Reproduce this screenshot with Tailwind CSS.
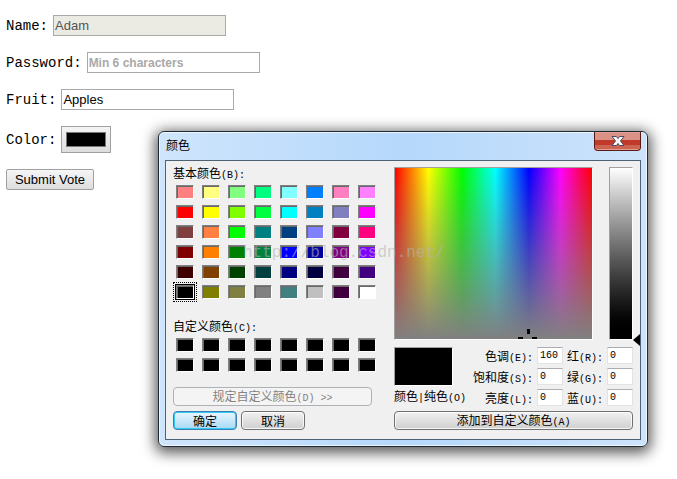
<!DOCTYPE html>
<html lang="zh-CN">
<head>
  <title>Vote</title>
  <meta charset="utf-8">
  <meta name="viewport" content="width=device-width, initial-scale=1">
  <script src="https://cdn.jsdelivr.net/npm/@tailwindcss/browser@4"></script>
</head>

<body class="relative min-h-screen bg-white text-black">
  <!-- Vote form -->
  <form class="flex flex-col items-start gap-4 pt-[15px] pl-[6px] font-['Liberation_Mono',monospace] text-sm">
    <div class="flex items-center gap-[5px]">
      <label for="name">Name:</label>
      <input id="name" type="text" value="Adam" disabled class="h-[21px] w-[173px] border border-[#a9a9a9] bg-[#ebebe4] px-px font-['Liberation_Sans',sans-serif] text-[13px] text-[#545454]">
    </div>
    <div class="flex items-center gap-[5px]">
      <label for="password">Password:</label>
      <input id="password" type="password" placeholder="Min 6 characters" class="h-[21px] w-[173px] border border-[#a9a9a9] bg-white px-px font-['Liberation_Sans',sans-serif] text-xs placeholder:font-bold placeholder:text-[#a9a9a9]">
    </div>
    <div class="flex items-center gap-[5px]">
      <label for="fruit">Fruit:</label>
      <input id="fruit" type="text" value="Apples" class="h-[21px] w-[173px] border border-[#a9a9a9] bg-white px-px font-['Liberation_Sans',sans-serif] text-[13px]">
    </div>
    <div class="flex items-center gap-[5px]">
      <label for="color">Color:</label>
      <input id="color" type="color" value="#000000" class="h-[27px] w-[50px] appearance-none border border-[#a0a0a0] bg-linear-to-b from-[#f4f4f4] to-[#dddddd] px-1 py-[5px] [&::-webkit-color-swatch-wrapper]:p-0 [&::-webkit-color-swatch]:rounded-none [&::-webkit-color-swatch]:border [&::-webkit-color-swatch]:border-[#777777]">
    </div>
    <button type="button" class="h-[21px] w-[88px] rounded-xs border border-[#a0a0a0] bg-linear-to-b from-[#f6f6f6] to-[#dddddd] font-['Liberation_Sans',sans-serif] text-[13px] leading-none whitespace-nowrap">Submit Vote</button>
  </form>

  <!-- Color dialog -->
  <div role="dialog" aria-labelledby="dialog-title" class="absolute top-[131px] right-[29px] left-[158px] min-w-[490px] rounded-md border border-[#1c2a36] bg-linear-to-r from-[#cfe5fc] via-[#b5d8fb] to-[#cde3fb] px-[6px] pb-[6px] font-['Noto_Sans_CJK_SC',sans-serif] text-xs leading-4 shadow-[0_3px_14px_3px_rgba(0,0,0,0.65)] inset-ring inset-ring-white/70">
    <div class="flex h-7 items-start justify-between">
      <h1 id="dialog-title" class="pt-[5px] pl-px">颜色</h1>
      <button type="button" aria-label="Close" class="flex h-[19px] w-[47px] items-center justify-center overflow-hidden rounded-b-sm border border-t-0 border-[#5c1a14] bg-[#e0a096]">
        <svg width="47" height="18" viewBox="0 0 47 18" class="shrink-0">
          <rect x="1" y="1" width="45" height="7" fill="#dc9186"/>
          <rect x="1" y="8" width="45" height="5" fill="#c0392b"/>
          <rect x="1" y="13" width="45" height="4" fill="#cd6350"/>
          <path d="M18 4.500h4.500l1.500 2 1.500-2H30l-3.500 4.500 3.500 4.500h-4.500l-1.500-2-1.500 2H18L21.500 9z" fill="#f8f8f8" stroke="#4b4a5e" stroke-width="1"/>
        </svg>
      </button>
    </div>

    <div class="flex justify-between border border-[#4f6274] bg-[#f0f0f0] pt-1 pr-[7px] pb-[9px] pl-[7px]">
      <!-- Swatches -->
      <div class="flex flex-col items-start">
        <h2 class="mb-1">基本颜色<span class="font-['Liberation_Mono',monospace] text-[10px]/none">(B):</span></h2>
        <div id="basic" class="grid grid-cols-8 gap-x-2 gap-y-[6px] pl-[3px]"></div>
        <h2 class="mt-[19px] mb-1">自定义颜色<span class="font-['Liberation_Mono',monospace] text-[10px]/none">(C):</span></h2>
        <div id="custom" class="grid grid-cols-8 gap-x-2 gap-y-[6px] pl-[3px]"></div>
        <button type="button" disabled class="mt-[15px] h-[19px] w-[199px] rounded-sm border border-[#adb2b5] bg-[#f4f4f4] leading-none text-[#838383]">规定自定义颜色<span class="font-['Liberation_Mono',monospace] text-[10px]/none">(D) &gt;&gt;</span></button>
        <div class="mt-[5px] flex gap-1">
          <button type="button" class="h-[19px] w-16 rounded-sm border border-[#3c7fb1] bg-linear-to-b from-[#eaf6fd] to-[#a7d9f5] leading-none inset-ring inset-ring-[#35c8f5]">确定</button>
          <button type="button" class="h-[19px] w-16 rounded-sm border border-[#707070] bg-linear-to-b from-[#f2f2f2] to-[#cfcfcf] leading-none inset-ring inset-ring-white/80">取消</button>
        </div>
      </div>

      <div class="flex w-[239px] flex-col pt-[2px]">
        <!-- Hue / saturation field and luminosity bar -->
        <div class="flex h-[173px]">
          <div class="relative w-[199px] border border-t-[#a0a0a0] border-r-white border-b-white border-l-[#a0a0a0] bg-[linear-gradient(to_bottom,rgba(128,128,128,0),rgb(128,128,128)),linear-gradient(to_right,#f00,#ff0_17%,#0f0_34%,#0ff_51%,#00f_68%,#f0f_84%,#f00)]">
            <svg width="19" height="11" viewBox="0 0 19 11" class="absolute right-[55px] bottom-0">
              <path d="M9 1h3v5h-3zM0 9h5v2h-5zM14 9h5v2h-5z" fill="#000"/>
            </svg>
          </div>
          <div class="ml-4 w-6 border border-t-[#a0a0a0] border-r-white border-b-white border-l-[#a0a0a0] bg-linear-to-b from-white to-black"></div>
          <svg width="7" height="12" viewBox="0 0 7 12" class="-mr-[7px] -mb-[6px] shrink-0 self-end">
            <path d="M0 6l7-6v12z" fill="#000"/>
          </svg>
        </div>

        <!-- Preview and numeric values -->
        <div class="mt-[7px] flex justify-between">
          <div>
            <div class="h-[39px] w-[59px] border border-t-[#a0a0a0] border-r-white border-b-white border-l-[#a0a0a0] bg-black"></div>
            <p class="mt-[2px] whitespace-nowrap">颜色<span class="font-['Liberation_Mono',monospace] text-[10px]/none">|</span>纯色<span class="font-['Liberation_Mono',monospace] text-[10px]/none">(O)</span></p>
          </div>
          <div class="grid grid-cols-[auto_26px_auto_26px] items-center gap-x-1 gap-y-1 text-right leading-[17px] whitespace-nowrap">
            <label for="hue">色调<span class="font-['Liberation_Mono',monospace] text-[10px]/none">(E):</span></label>
            <input id="hue" type="text" value="160" class="h-[17px] w-full border border-[#e3e3e3] border-t-[#abadb3] bg-white px-[2px] font-['Liberation_Mono',monospace] text-[10px]">
            <label for="red">红<span class="font-['Liberation_Mono',monospace] text-[10px]/none">(R):</span></label>
            <input id="red" type="text" value="0" class="h-[17px] w-full border border-[#e3e3e3] border-t-[#abadb3] bg-white px-[2px] font-['Liberation_Mono',monospace] text-[10px]">
            <label for="sat">饱和度<span class="font-['Liberation_Mono',monospace] text-[10px]/none">(S):</span></label>
            <input id="sat" type="text" value="0" class="h-[17px] w-full border border-[#e3e3e3] border-t-[#abadb3] bg-white px-[2px] font-['Liberation_Mono',monospace] text-[10px]">
            <label for="green">绿<span class="font-['Liberation_Mono',monospace] text-[10px]/none">(G):</span></label>
            <input id="green" type="text" value="0" class="h-[17px] w-full border border-[#e3e3e3] border-t-[#abadb3] bg-white px-[2px] font-['Liberation_Mono',monospace] text-[10px]">
            <label for="lum">亮度<span class="font-['Liberation_Mono',monospace] text-[10px]/none">(L):</span></label>
            <input id="lum" type="text" value="0" class="h-[17px] w-full border border-[#e3e3e3] border-t-[#abadb3] bg-white px-[2px] font-['Liberation_Mono',monospace] text-[10px]">
            <label for="blue">蓝<span class="font-['Liberation_Mono',monospace] text-[10px]/none">(U):</span></label>
            <input id="blue" type="text" value="0" class="h-[17px] w-full border border-[#e3e3e3] border-t-[#abadb3] bg-white px-[2px] font-['Liberation_Mono',monospace] text-[10px]">
          </div>
        </div>
        <button type="button" class="mt-[5px] h-[19px] rounded-sm border border-[#707070] bg-linear-to-b from-[#f2f2f2] to-[#cfcfcf] leading-none inset-ring inset-ring-white/80">添加到自定义颜色<span class="font-['Liberation_Mono',monospace] text-[10px]/none">(A)</span></button>
      </div>
    </div>

    <!-- Watermark -->
    <p class="pointer-events-none absolute top-[109px] left-[84px] font-['Liberation_Mono',monospace] text-base text-[#b4b4b4]/60">http://blog.csdn.net/</p>
  </div>

  <script>
    const basic = [
      '#ff8080', '#ffff80', '#80ff80', '#00ff80', '#80ffff', '#0080ff', '#ff80c0', '#ff80ff',
      '#ff0000', '#ffff00', '#80ff00', '#00ff40', '#00ffff', '#0080c0', '#8080c0', '#ff00ff',
      '#804040', '#ff8040', '#00ff00', '#008080', '#004080', '#8080ff', '#800040', '#ff0080',
      '#800000', '#ff8000', '#008000', '#008040', '#0000ff', '#0000a0', '#800080', '#8000ff',
      '#400000', '#804000', '#004000', '#004040', '#000080', '#000040', '#400040', '#400080',
      '#000000', '#808000', '#808040', '#808080', '#408080', '#c0c0c0', '#400040', '#ffffff'
    ];
    const custom = Array(16).fill('#000000');

    function addSwatches(id, colors, selected) {
      colors.forEach((color, i) => {
        const button = document.createElement('button');
        button.type = 'button';
        button.ariaLabel = color;
        button.className = 'h-[14px] w-[18px] border border-t-[#808080] border-r-white border-b-white border-l-[#808080] shadow-[inset_1px_1px_0_#696969]';
        if (i === selected) {
          button.className += ' ring ring-black outline outline-dotted outline-black outline-offset-2';
        }
        button.style.backgroundColor = color;
        document.getElementById(id).append(button);
      });
    }

    addSwatches('basic', basic, 40);
    addSwatches('custom', custom, -1);
  </script>
</body>
</html>
